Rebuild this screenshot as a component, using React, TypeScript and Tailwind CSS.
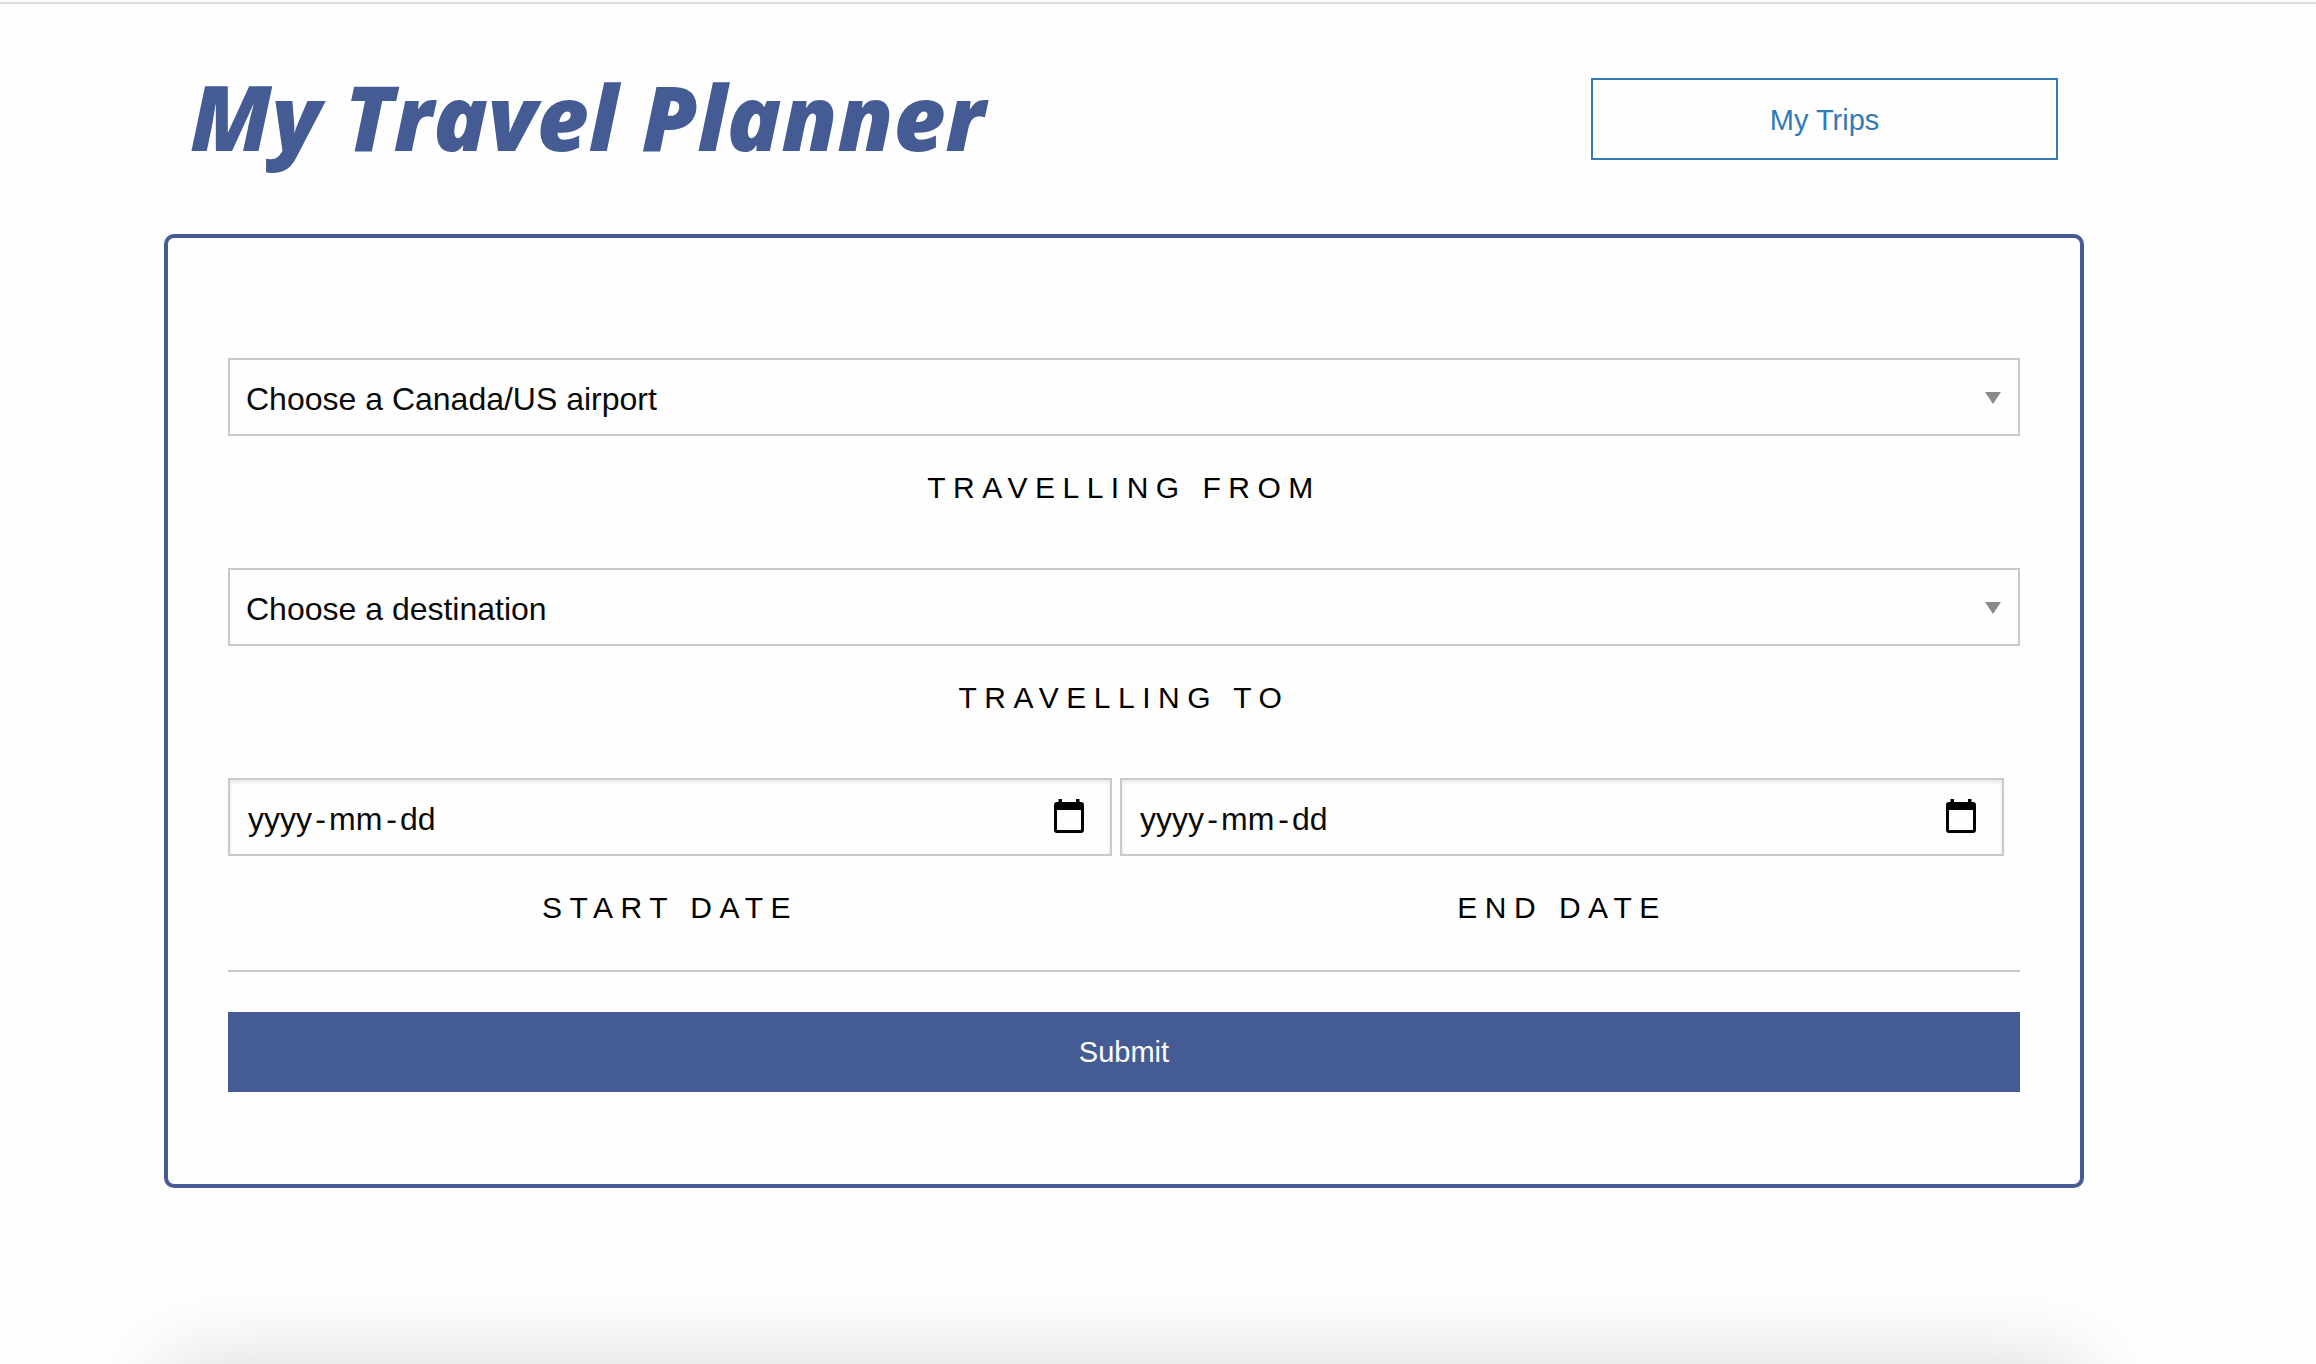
import { useId } from "react";
import type { ReactNode } from "react";

const LABEL =
  "mt-7 block text-center text-[30px] leading-12 tracking-[0.25em] text-black uppercase";

function SelectField({ label, prompt, options }: { label: string; prompt: string; options: string[] }) {
  const id = useId();
  return (
    <div className="mb-14">
      <div className="relative">
        <select
          id={id}
          className="block h-[78px] w-full appearance-none rounded-none border-2 border-[#cacaca] bg-[#fefefe] px-4 pt-[3px] text-[32px] text-[#0a0a0a]"
        >
          <option>{prompt}</option>
          {options.map((o) => (
            <option key={o}>{o}</option>
          ))}
        </select>
        <svg
          className="pointer-events-none absolute top-[34px] right-[19px] h-3 w-4"
          viewBox="0 0 16 12"
          aria-hidden="true"
        >
          <path d="M0 0H16L8 12Z" fill="#8a8a8a" />
        </svg>
      </div>
      <label htmlFor={id} className={LABEL}>
        {label}
      </label>
    </div>
  );
}

function Separator({ children }: { children: ReactNode }) {
  return <span className="w-[17px] pt-[3px] text-center">{children}</span>;
}

const PART =
  "bg-transparent p-0 pt-[3px] outline-none placeholder:text-[#0a0a0a] placeholder:opacity-100";

function DateField({ label }: { label: string }) {
  const id = useId();
  return (
    <div>
      <div
        role="group"
        aria-label={label}
        className="flex h-[78px] items-center border-2 border-[#cacaca] bg-[#fefefe] pr-[26px] pl-[18px] text-[32px] text-[#0a0a0a] shadow-[inset_0_2px_4px_rgba(10,10,10,0.1)]"
      >
        <input id={id} className={`${PART} w-16`} placeholder="yyyy" maxLength={4} />
        <Separator>-</Separator>
        <input aria-label={`${label} month`} className={`${PART} w-[54px]`} placeholder="mm" maxLength={2} />
        <Separator>-</Separator>
        <input aria-label={`${label} day`} className={`${PART} w-9`} placeholder="dd" maxLength={2} />
        <button type="button" aria-label={`Open ${label} calendar`} className="mb-0.5 ml-auto">
          <svg className="block h-[34px] w-[30px]" viewBox="0 0 30 34" aria-hidden="true">
            <path
              fillRule="evenodd"
              fill="#000"
              d="M4.500 0H8V3H22V0H25.500V3H27A3 3 0 0 1 30 6V31A3 3 0 0 1 27 34H3A3 3 0 0 1 0 31V6A3 3 0 0 1 3 3H4.500ZM3 11V31H27V11Z"
            />
          </svg>
        </button>
      </div>
      <label htmlFor={id} className={LABEL}>
        {label}
      </label>
    </div>
  );
}

export default function App() {
  return (
    <div className="h-screen overflow-hidden bg-[#fefefe] pt-0.5 font-['Liberation_Sans',Arial,sans-serif]">
      <div className="border-t-2 border-[#dcdce4] pr-[232px] pl-[164px]">
        <header className="flex items-center justify-between px-[26px] py-[74px]">
          <h1 className="pb-1.5 font-['Open_Sans',sans-serif] text-[90px] leading-[76px] font-extrabold whitespace-nowrap text-[#445c93] italic">
            My Travel Planner
          </h1>
          <button
            type="button"
            className="h-[82px] w-1/4 border-2 border-[#337ab7] pt-[3px] text-[29px] text-[#337ab7]"
          >
            My Trips
          </button>
        </header>

        <main>
          <form
            className="rounded-[10px] border-4 border-[#445c93] px-[60px] pt-[120px] pb-[92px]"
            onSubmit={(e) => e.preventDefault()}
          >
            <SelectField
              label="Travelling from"
              prompt="Choose a Canada/US airport"
              options={["Toronto", "Vancouver", "New York"]}
            />
            <SelectField
              label="Travelling to"
              prompt="Choose a destination"
              options={["London", "Paris", "Tokyo"]}
            />
            <div className="mr-4 grid grid-cols-2 gap-2">
              <DateField label="Start date" />
              <DateField label="End date" />
            </div>
            <hr className="mt-[38px] border-t-2 border-[#cacaca]" />
            <button type="submit" className="mt-10 block h-20 w-full bg-[#445c93] pt-0.5 text-[29px] text-[#fefefe]">
              Submit
            </button>
          </form>

          <section
            aria-label="Trip results"
            className="mt-44 h-96 bg-[#fefefe] shadow-[0_0_80px_rgba(0,0,0,0.15)]"
          />
        </main>
      </div>
    </div>
  );
}
